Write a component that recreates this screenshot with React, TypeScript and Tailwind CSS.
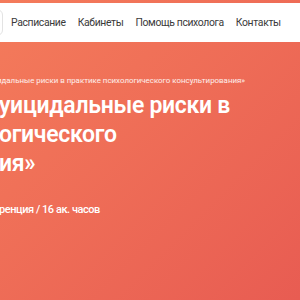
export default function App() {
  const nav = ['Расписание', 'Кабинеты', 'Помощь психолога', 'Контакты']

  return (
    <div
      className="h-[300px] w-[300px] overflow-hidden bg-gradient-to-br from-[#f47b5b] to-[#e85c52] pt-[3px]"
      style={{ fontFamily: 'Roboto, "Noto Sans", sans-serif' }}
    >
      <header className="flex h-[39px] items-center bg-white">
        <div className="ml-[-30px] h-[27px] w-[33px] shrink-0 rounded-[6px] border border-[#e3e3e3]" />
        <nav className="ml-[8px] flex gap-[12px] text-[10.4px] tracking-[-0.35px] text-[#3a3a3a] whitespace-nowrap">
          {nav.map((item) => (
            <span key={item}>{item}</span>
          ))}
        </nav>
      </header>

      <section className="text-white whitespace-nowrap">
        <div className="ml-[-3px] pt-[33px] text-[7.9px] leading-[12px] text-white/90">
          идальные риски в практике психологического консультирования»
        </div>
        <h1 className="ml-[-1px] mt-[4px] text-[23px] font-semibold leading-[29px] tracking-[-0.3px]">
          уицидальные риски в
          <br />
          огического
          <br />
          ия»
        </h1>
        <div className="ml-[-1px] mt-[24px] text-[11px] font-medium leading-[16px] tracking-[-0.45px]">
          ренция / 16 ак. часов
        </div>
      </section>
    </div>
  )
}
